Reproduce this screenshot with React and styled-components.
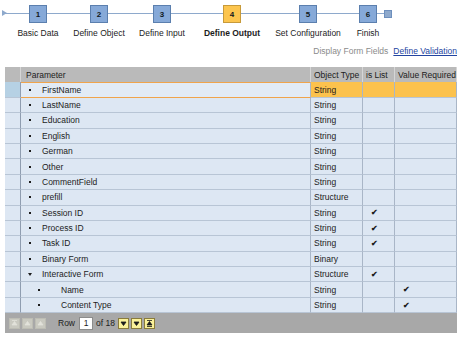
import React from "react";
import styled, { createGlobalStyle } from "styled-components";

const GlobalStyle = createGlobalStyle`
  html, body {
    margin: 0;
    padding: 0;
    background: #ffffff;
  }
  body {
    font-family: "Liberation Sans", Arial, sans-serif;
    font-size: 8px;
    color: #1c1c1c;
  }
`;

const Page = styled.div`
  width: 461px;
  height: 337px;
  overflow: hidden;
  background: #fff;
`;

const Roadmap = styled.div`
  position: relative;
  display: flex;
  align-items: flex-start;
  height: 40px;
  padding-top: 5px;
  box-sizing: border-box;

  &::before {
    content: "";
    position: absolute;
    left: 3px;
    top: 13px;
    width: 385px;
    height: 1px;
    background: #8ea9cc;
  }
`;

const StartArrow = styled.div`
  width: 0;
  height: 0;
  margin-top: 5px;
  margin-left: 2px;
  border-top: 3px solid transparent;
  border-bottom: 3px solid transparent;
  border-left: 5px solid #8ea9cc;
  position: relative;
`;

const Step = styled.div`
  position: relative;
  display: flex;
  flex-direction: column;
  align-items: center;
  width: ${(p) => p.$w}px;
  margin-left: ${(p) => p.$ml}px;
  flex-shrink: 0;
`;

const StepBox = styled.div`
  width: 16px;
  height: 16px;
  border: 1px solid ${(p) => (p.$active ? "#c79a3a" : "#5b7fae")};
  background: ${(p) => (p.$active ? "#fcc54e" : "#86a9d8")};
  display: flex;
  align-items: center;
  justify-content: center;
  font-weight: bold;
  font-size: 8px;
  color: #101820;
`;

const StepLabel = styled.div`
  margin-top: 5px;
  white-space: nowrap;
  font-size: 8.5px;
  font-weight: ${(p) => (p.$active ? "bold" : "normal")};
  color: #1c1c1c;
`;

const EndSquare = styled.div`
  position: relative;
  width: 6px;
  height: 6px;
  margin-top: 5px;
  margin-left: 1px;
  background: #8ea9cc;
  border: 1px solid #6d8fbd;
`;

const Actions = styled.div`
  display: flex;
  justify-content: flex-end;
  gap: 5px;
  height: 27px;
  padding-right: 4px;
  padding-top: 6px;
  box-sizing: border-box;
  font-size: 8.5px;
`;

const Muted = styled.span`
  color: #8a8a8a;
`;

const Link = styled.a`
  color: #2244a0;
  text-decoration: underline;
  cursor: pointer;
`;

const Grid = styled.div`
  margin-left: 5px;
  width: 452px;
  display: grid;
  grid-template-columns: 16px 290px 52px 32px 62px;
  grid-auto-rows: 15.4px;
`;

const HeadCell = styled.div`
  background: #bababa;
  border-right: 1px solid #d6d6d6;
  display: flex;
  align-items: center;
  padding-left: ${(p) => p.$pl ?? 3}px;
  font-size: 8.5px;
  color: #202020;
  box-sizing: border-box;
  height: 16px;
`;

const Cell = styled.div`
  box-sizing: border-box;
  display: flex;
  align-items: center;
  background: ${(p) => (p.$sel ? "#fcc24d" : "#dde7f3")};
  border-bottom: 1px solid #b8c5d5;
  border-right: 1px solid #a9b6c7;
  padding-left: ${(p) => p.$pl ?? 3}px;
  font-size: 8.5px;
  white-space: nowrap;
`;

const SelectorCell = styled(Cell)`
  background: ${(p) => (p.$sel ? "#b6d1e4" : "#dde7f3")};
  border-right: 1px solid #8f9db0;
`;

const ParamCell = styled(Cell)`
  ${(p) =>
    p.$sel &&
    `border-top: 1px solid #f0a44c; border-bottom: 1px solid #f0a44c; background: #e2ebf6;`}
  padding-left: ${(p) => (p.$child ? 17 : 8)}px;
`;

const Marker = styled.span`
  display: inline-flex;
  align-items: center;
  width: ${(p) => (p.$child ? 23 : 13)}px;
  flex-shrink: 0;
`;

const Bullet = styled.span`
  width: 2px;
  height: 2px;
  background: #1c1c1c;
`;

const Caret = styled.span`
  width: 0;
  height: 0;
  margin-left: -1px;
  border-left: 2.5px solid transparent;
  border-right: 2.5px solid transparent;
  border-top: 3px solid #1c1c1c;
`;

const Check = styled(Cell)`
  padding-left: ${(p) => p.$pl}px;
  font-size: 8px;
  font-weight: bold;
`;

const Footer = styled.div`
  margin-left: 5px;
  width: 452px;
  height: 20px;
  background: #a8a8a8;
  display: flex;
  align-items: center;
  padding-left: 4px;
  box-sizing: border-box;
  font-size: 8.5px;
  color: #1c1c1c;
`;

const NavButton = styled.div`
  width: 9px;
  height: 9px;
  margin-right: 2px;
  border: 1px solid ${(p) => (p.$on ? "#8a7c3c" : "#bdbdb4")};
  background: ${(p) => (p.$on ? "#fbf29a" : "#c9c9c0")};
  color: ${(p) => (p.$on ? "#1c1c1c" : "#e2e2da")};
  display: flex;
  align-items: center;
  justify-content: center;
`;

const RowLabel = styled.span`
  margin-left: 10px;
  margin-right: 4px;
`;

const RowInput = styled.div`
  width: 12px;
  height: 11px;
  background: #fff;
  border: 1px solid #8c8c8c;
  display: flex;
  align-items: center;
  justify-content: center;
  margin-right: 3px;
`;

const OfLabel = styled.span`
  margin-right: 3px;
`;

const steps = [
  { n: 1, label: "Basic Data", w: 50, ml: 6 },
  { n: 2, label: "Define Object", w: 56, ml: 8 },
  { n: 3, label: "Define Input", w: 50, ml: 10 },
  { n: 4, label: "Define Output", w: 60, ml: 15, active: true },
  { n: 5, label: "Set Configuration", w: 70, ml: 11 },
  { n: 6, label: "Finish", w: 30, ml: 10 },
];

const rows = [
  { name: "FirstName", type: "String", sel: true },
  { name: "LastName", type: "String" },
  { name: "Education", type: "String" },
  { name: "English", type: "String" },
  { name: "German", type: "String" },
  { name: "Other", type: "String" },
  { name: "CommentField", type: "String" },
  { name: "prefill", type: "Structure" },
  { name: "Session ID", type: "String", list: true },
  { name: "Process ID", type: "String", list: true },
  { name: "Task ID", type: "String", list: true },
  { name: "Binary Form", type: "Binary" },
  { name: "Interactive Form", type: "Structure", list: true, open: true },
  { name: "Name", type: "String", req: true, child: true },
  { name: "Content Type", type: "String", req: true, child: true },
];

function Glyph({ kind }) {
  const paths = {
    first: "M2 1.5h5M4.5 2.5L2 6h5z",
    prev: "M4.5 2.5L2 6h5z",
    next: "M2 3h5L4.5 6.5z",
    last: "M2 1.5h5M4.5 2.5L2 6h5zM2 7.5h5",
  };
  return (
    <svg width="9" height="9" viewBox="0 0 9 9">
      <path d={paths[kind]} stroke="currentColor" fill="currentColor" strokeWidth="0.8" />
    </svg>
  );
}

function App() {
  return (
    <Page>
      <GlobalStyle />
      <Roadmap>
        <StartArrow />
        {steps.map((s) => (
          <Step key={s.n} $w={s.w} $ml={s.ml}>
            <StepBox $active={s.active}>{s.n}</StepBox>
            <StepLabel $active={s.active}>{s.label}</StepLabel>
          </Step>
        ))}
        <EndSquare />
      </Roadmap>
      <Actions>
        <Muted>Display Form Fields</Muted>
        <Link>Define Validation</Link>
      </Actions>
      <Grid>
        <HeadCell $pl={0} />
        <HeadCell $pl={5}>Parameter</HeadCell>
        <HeadCell>Object Type</HeadCell>
        <HeadCell>is List</HeadCell>
        <HeadCell>Value Required</HeadCell>
        {rows.map((r) => (
          <React.Fragment key={r.name}>
            <SelectorCell $sel={r.sel} />
            <ParamCell $sel={r.sel} $child={r.child}>
              <Marker $child={r.child}>{r.open ? <Caret /> : <Bullet />}</Marker>
              {r.name}
            </ParamCell>
            <Cell $sel={r.sel}>{r.type}</Cell>
            <Check $sel={r.sel} $pl={8}>{r.list ? "✔" : ""}</Check>
            <Check $sel={r.sel} $pl={8}>{r.req ? "✔" : ""}</Check>
          </React.Fragment>
        ))}
      </Grid>
      <Footer>
        <NavButton><Glyph kind="first" /></NavButton>
        <NavButton><Glyph kind="prev" /></NavButton>
        <NavButton><Glyph kind="prev" /></NavButton>
        <RowLabel>Row</RowLabel>
        <RowInput>1</RowInput>
        <OfLabel>of 18</OfLabel>
        <NavButton $on><Glyph kind="next" /></NavButton>
        <NavButton $on><Glyph kind="next" /></NavButton>
        <NavButton $on><Glyph kind="last" /></NavButton>
      </Footer>
    </Page>
  );
}

export default App;
